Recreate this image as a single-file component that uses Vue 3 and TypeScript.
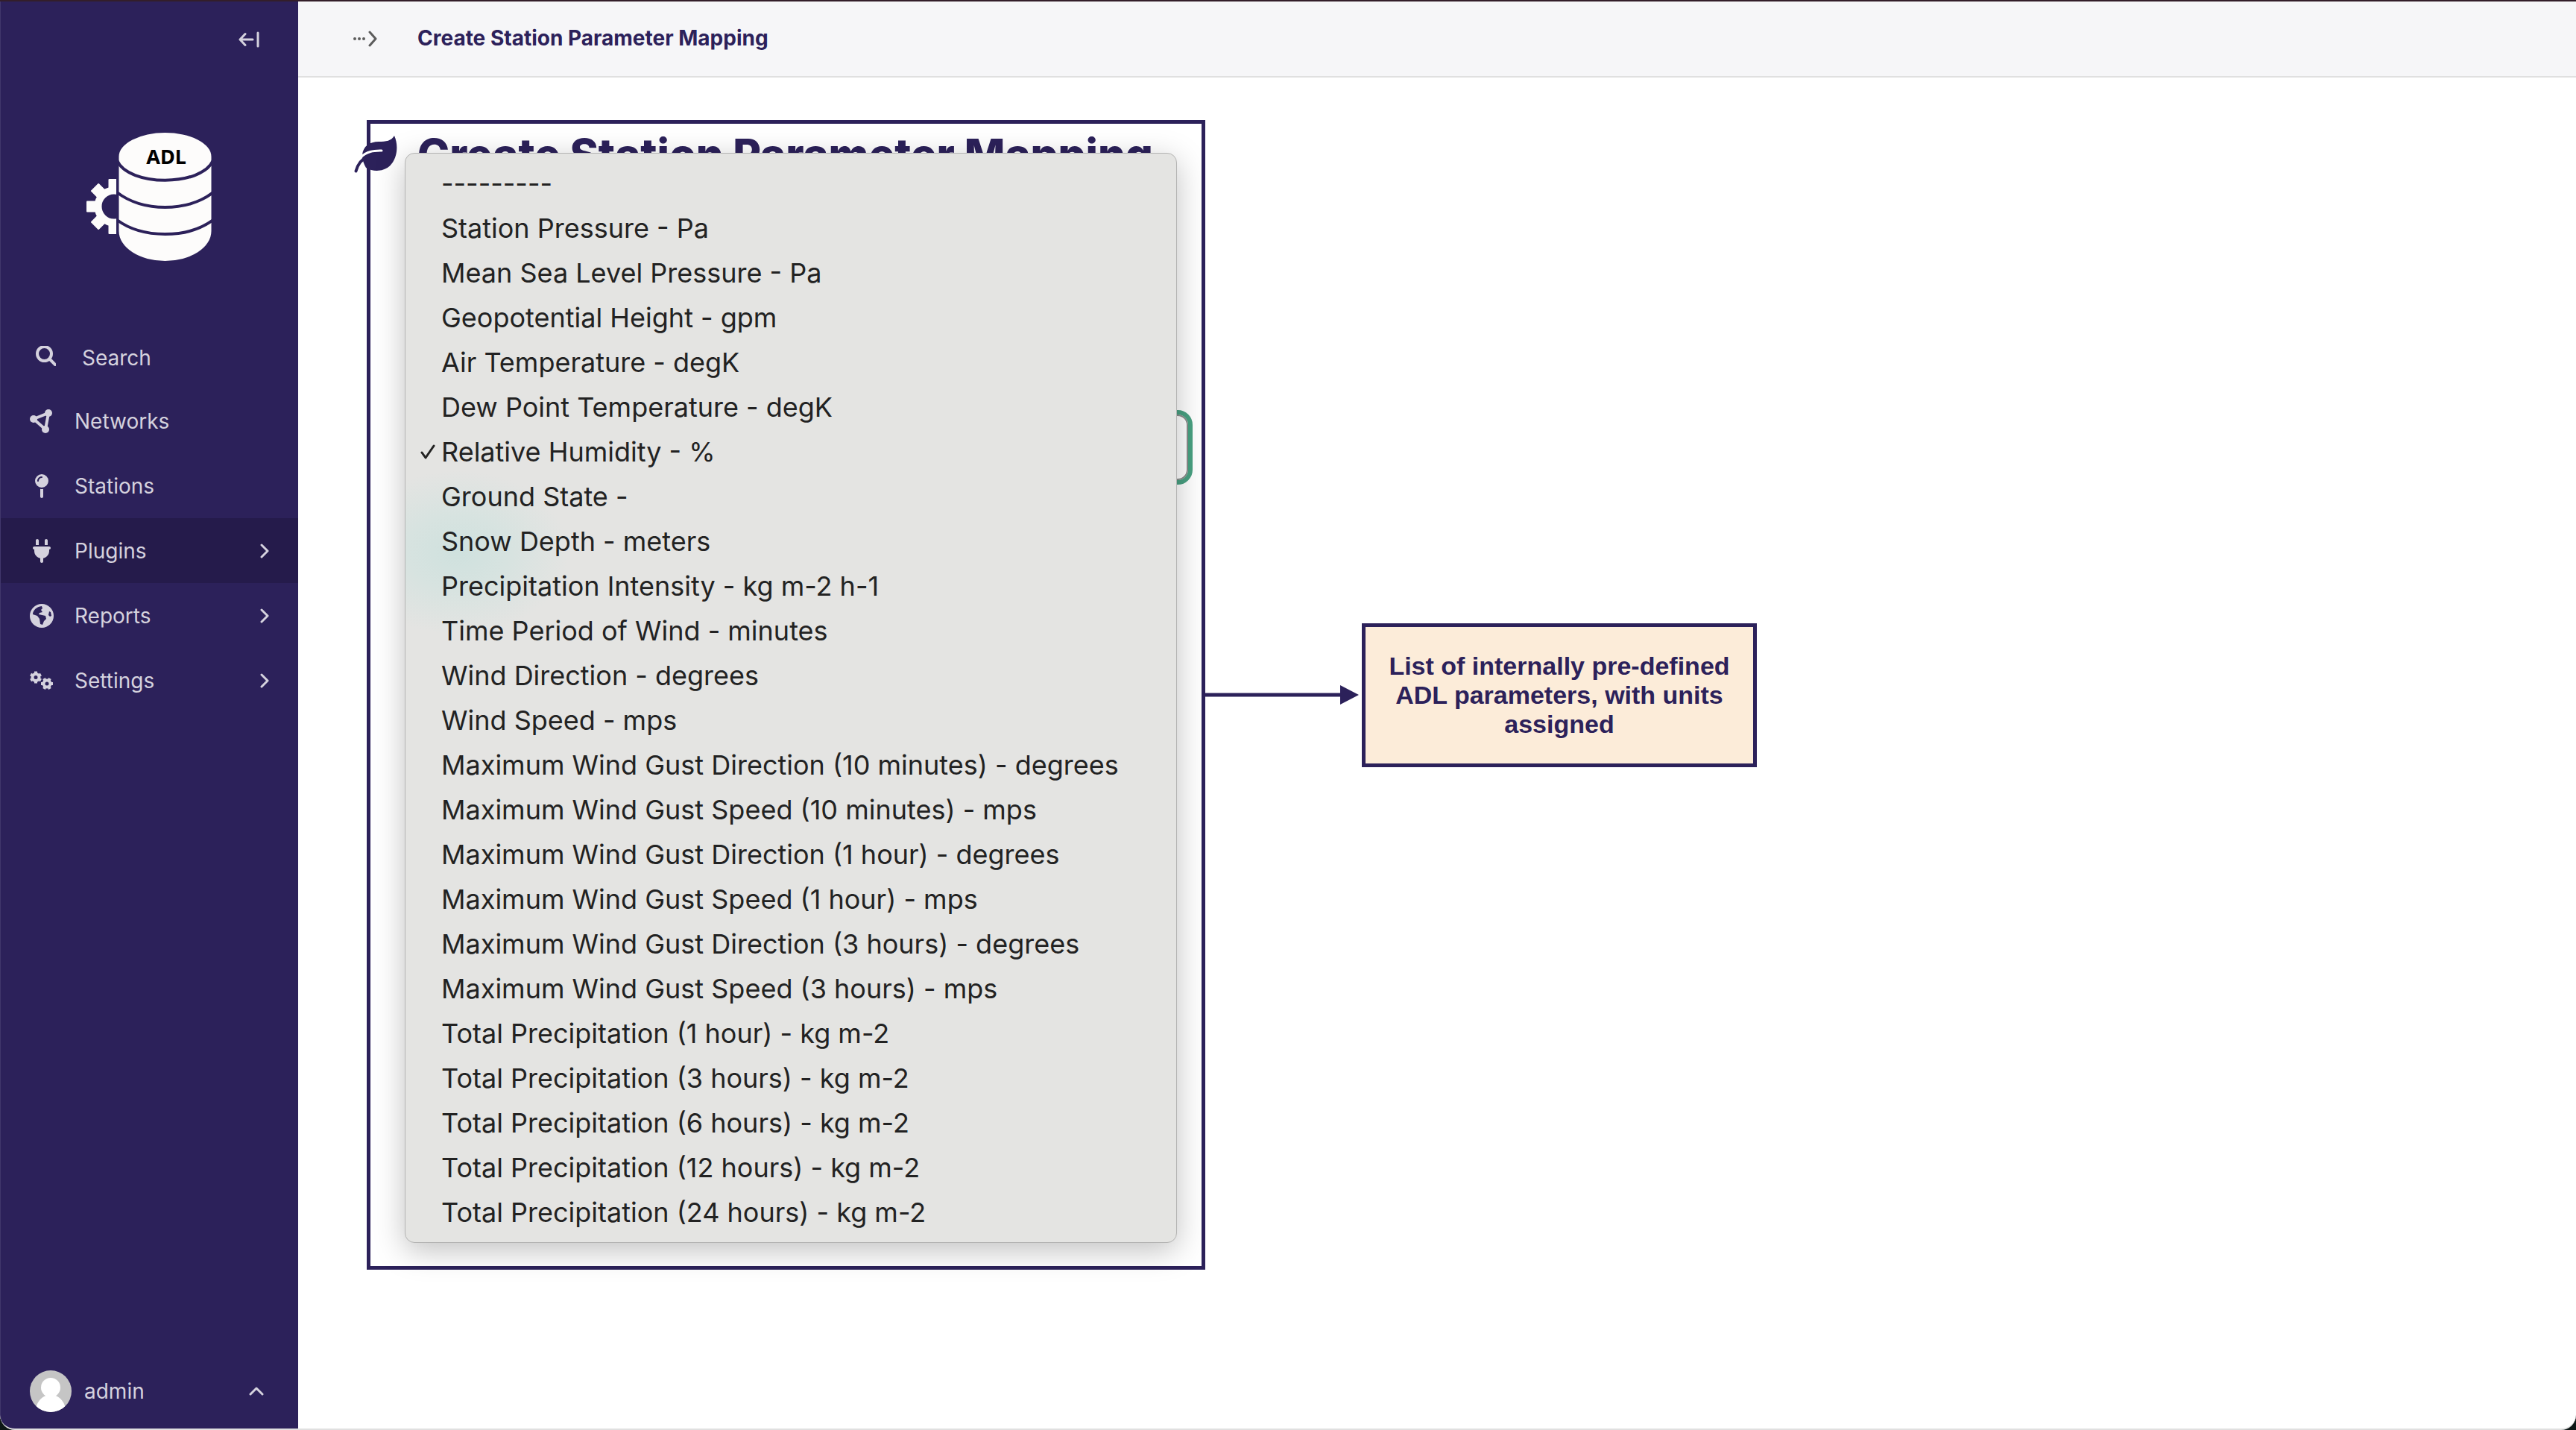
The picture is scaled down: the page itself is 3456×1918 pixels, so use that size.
<script setup lang="ts">
import { ref } from 'vue'

interface NavItem {
  label: string
  icon: 'networks' | 'stations' | 'plugins' | 'reports' | 'settings'
  expandable: boolean
}

const navItems: NavItem[] = [
  { label: 'Networks', icon: 'networks', expandable: false },
  { label: 'Stations', icon: 'stations', expandable: false },
  { label: 'Plugins', icon: 'plugins', expandable: true },
  { label: 'Reports', icon: 'reports', expandable: true },
  { label: 'Settings', icon: 'settings', expandable: true },
]
const activeItem = ref('Plugins')

const parameters: string[] = [
  '---------',
  'Station Pressure - Pa',
  'Mean Sea Level Pressure - Pa',
  'Geopotential Height - gpm',
  'Air Temperature - degK',
  'Dew Point Temperature - degK',
  'Relative Humidity - %',
  'Ground State -',
  'Snow Depth - meters',
  'Precipitation Intensity - kg m-2 h-1',
  'Time Period of Wind - minutes',
  'Wind Direction - degrees',
  'Wind Speed - mps',
  'Maximum Wind Gust Direction (10 minutes) - degrees',
  'Maximum Wind Gust Speed (10 minutes) - mps',
  'Maximum Wind Gust Direction (1 hour) - degrees',
  'Maximum Wind Gust Speed (1 hour) - mps',
  'Maximum Wind Gust Direction (3 hours) - degrees',
  'Maximum Wind Gust Speed (3 hours) - mps',
  'Total Precipitation (1 hour) - kg m-2',
  'Total Precipitation (3 hours) - kg m-2',
  'Total Precipitation (6 hours) - kg m-2',
  'Total Precipitation (12 hours) - kg m-2',
  'Total Precipitation (24 hours) - kg m-2',
]
const selected = ref('Relative Humidity - %')

const toothAngles = [0, 60, 120, 180, 240, 300]
const logoTeeth = [0, 45, 90, 135, 180]
</script>

<template>
  <div class="app">
    <aside class="sidebar">
      <button class="collapse" type="button" aria-label="Toggle sidebar">
        <svg width="28" height="22" viewBox="0 0 28 22" fill="none" stroke="currentColor" stroke-width="3" stroke-linecap="round" stroke-linejoin="round">
          <path d="M9 3.500L2 11l7 7.500M2.500 11H19M26 2v18" />
        </svg>
      </button>

      <a class="logo" href="#" aria-label="Home">
        <svg width="168" height="172" viewBox="0 0 168 172">
          <defs>
            <clipPath id="gear-half"><rect x="0" y="50" width="40" height="110" /></clipPath>
          </defs>
          <g clip-path="url(#gear-half)">
            <g transform="translate(37 99)">
              <circle r="21.500" fill="none" stroke="#fdfcfb" stroke-width="10" />
              <rect v-for="a in logoTeeth" :key="a" x="-7.500" y="-37" width="15" height="18" rx="1" fill="#fdfcfb" :transform="`rotate(${-a})`" />
            </g>
          </g>
          <path d="M43.500 32a62 32 0 0 1 124 0V132a62 40 0 0 1-124 0z" fill="#fdfcfb" />
          <g fill="none" class="logo-gap" stroke-width="4">
            <path d="M41 37C56 72.600 155 72.600 170 37" />
            <path d="M41 80C75 106.600 136 106.600 170 80" />
            <path d="M41 117C75 142.300 136 142.300 170 117" />
          </g>
          <text x="107" y="42" text-anchor="middle" class="logo-text">ADL</text>
        </svg>
      </a>

      <nav class="nav" aria-label="Main">
        <a class="nav-item search" href="#">
          <svg class="nav-icon" width="28" height="28" viewBox="0 0 28 28" fill="none" stroke="currentColor" stroke-width="4" stroke-linecap="round">
            <circle cx="12.500" cy="10.500" r="9.500" />
            <path d="M20 18l7 7" />
          </svg>
          <span class="nav-label">Search</span>
        </a>
        <a
          v-for="item in navItems"
          :key="item.label"
          class="nav-item"
          :class="{ active: item.label === activeItem }"
          href="#"
          @click.prevent="activeItem = item.label"
        >
          <svg v-if="item.icon === 'networks'" class="nav-icon" width="32" height="32" viewBox="0 0 32 32">
            <path d="M5 13L25 5L21 27Z" fill="none" stroke="currentColor" stroke-width="4" />
            <g fill="currentColor"><circle cx="5" cy="13" r="5" /><circle cx="25" cy="5" r="5" /><circle cx="21" cy="27" r="5" /></g>
          </svg>
          <svg v-else-if="item.icon === 'stations'" class="nav-icon" width="32" height="32" viewBox="0 0 320 512" fill="currentColor">
            <path d="M16 144a144 144 0 1 1 288 0A144 144 0 1 1 16 144zM160 80c8.800 0 16-7.200 16-16s-7.200-16-16-16c-53 0-96 43-96 96c0 8.800 7.200 16 16 16s16-7.200 16-16c0-35.300 28.700-64 64-64zM128 480V317.100c10.400 1.900 21.100 2.900 32 2.900s21.600-1 32-2.900V480c0 17.700-14.300 32-32 32s-32-14.300-32-32z" />
          </svg>
          <svg v-else-if="item.icon === 'plugins'" class="nav-icon" width="32" height="32" viewBox="0 0 384 512" fill="currentColor">
            <path d="M96 0C78.300 0 64 14.300 64 32v96h64V32c0-17.700-14.300-32-32-32zM288 0c-17.700 0-32 14.300-32 32v96h64V32c0-17.700-14.300-32-32-32zM32 160c-17.700 0-32 14.300-32 32s14.300 32 32 32v32c0 77.400 55 142 128 156.800V480c0 17.700 14.300 32 32 32s32-14.300 32-32V412.800C297 398 352 333.400 352 256V224c17.700 0 32-14.300 32-32s-14.300-32-32-32H32z" />
          </svg>
          <svg v-else-if="item.icon === 'reports'" class="nav-icon" width="32" height="32" viewBox="0 0 32 32">
            <circle cx="16" cy="16" r="16" fill="currentColor" />
            <g class="globe-sea">
              <path d="M4 14C4 9 9 3.500 16 3L17 6L15 8L17 11L13 12L12 14L21 16L22 20L19 23L17 28L14 27L13 20L10 16Z" />
              <path d="M26 10L28 11L29 16L27 17L25 15Z" />
            </g>
          </svg>
          <svg v-else class="nav-icon" width="32" height="32" viewBox="0 0 32 32" fill="none" stroke="currentColor">
            <g transform="translate(8 11.500)">
              <circle r="4.500" stroke-width="4" />
              <path v-for="a in toothAngles" :key="a" d="M0-5.500V-8" stroke-width="4" :transform="`rotate(${a})`" />
            </g>
            <g transform="translate(23 20)">
              <circle r="4.500" stroke-width="4" />
              <path v-for="a in toothAngles" :key="a" d="M0-5.500V-8" stroke-width="4" :transform="`rotate(${a + 30})`" />
            </g>
          </svg>
          <span class="nav-label">{{ item.label }}</span>
          <svg v-if="item.expandable" class="chevron" width="12" height="20" viewBox="0 0 12 20" fill="none" stroke="currentColor" stroke-width="3" stroke-linecap="round" stroke-linejoin="round">
            <path d="M2 2l8 8-8 8" />
          </svg>
        </a>
      </nav>

      <button class="account" type="button">
        <svg width="56" height="56" viewBox="0 0 56 56">
          <defs><clipPath id="avatar-round"><circle cx="28" cy="28" r="28" /></clipPath></defs>
          <g clip-path="url(#avatar-round)">
            <rect width="56" height="56" fill="#c5c5c5" />
            <circle cx="28" cy="23" r="13" fill="#fff" />
            <path d="M7 56C9 40 18 33 28 33s19 7 21 23z" fill="#fff" />
          </g>
        </svg>
        <span class="account-name">admin</span>
        <svg class="account-caret" width="20" height="12" viewBox="0 0 20 12" fill="none" stroke="currentColor" stroke-width="3" stroke-linecap="round" stroke-linejoin="round">
          <path d="M2 10l8-8 8 8" />
        </svg>
      </button>
    </aside>

    <div class="page">
      <header class="topbar">
        <button class="crumbs" type="button" aria-label="Toggle breadcrumbs">
          <svg width="32" height="22" viewBox="0 0 32 22" fill="none" stroke="currentColor" stroke-linecap="round" stroke-linejoin="round">
            <path d="M2 11h.01M8 11h.01M14 11h.01" stroke-width="4" />
            <path d="M22 2l8 9-8 9" stroke-width="3" />
          </svg>
        </button>
        <span class="crumb-title">Create Station Parameter Mapping</span>
      </header>

      <main class="content">
        <section class="panel">
          <form class="form">
            <h1 class="title">
              <svg width="58" height="50" viewBox="0 0 58 50">
                <path d="M54 0C60 13 58 31 48 40.500C40 48 26 49 16 43C13 38 11 32 11 26C12 14 21 8 33 8C43 8 50 7 54 0Z" fill="currentColor" />
                <path d="M9 29C17 21 26 20 37 20" fill="none" stroke="#fff" stroke-width="3" stroke-linecap="round" />
                <path d="M2.500 47.500C5 38 11 31 19 27" fill="none" stroke="currentColor" stroke-width="4" stroke-linecap="round" />
              </svg>
              <span>Create Station Parameter Mapping</span>
            </h1>
            <select v-model="selected" class="field" aria-label="ADL parameter">
              <option v-for="p in parameters" :key="p" :value="p">{{ p }}</option>
            </select>
          </form>

          <ul class="menu" role="listbox" aria-label="ADL parameter">
            <li
              v-for="p in parameters"
              :key="p"
              class="option"
              role="option"
              :aria-selected="p === selected"
              @click="selected = p"
            >
              <span class="tick">
                <svg v-if="p === selected" width="20" height="20" viewBox="0 0 20 20" fill="none" stroke="currentColor" stroke-width="3" stroke-linecap="round" stroke-linejoin="round">
                  <path d="M2 11l5 7L18 2" />
                </svg>
              </span>
              <span>{{ p }}</span>
            </li>
          </ul>
        </section>

        <svg class="arrow" width="206" height="26" viewBox="0 0 206 26" fill="currentColor" aria-hidden="true">
          <path d="M0 10.500H181V0L206 13L181 26V15.500H0Z" />
        </svg>

        <p class="note">List of internally pre-defined ADL parameters, with units assigned</p>
      </main>
    </div>
  </div>
</template>

<style>
html {
  background: #0d1716;
}
body {
  margin: 0;
}
</style>

<style scoped>
.app {
  --navy: #2c215a;
  box-sizing: border-box;
  display: flex;
  min-height: 100vh;
  overflow: hidden;
  border-top: 2px solid #331e2a;
  border-bottom: 2px solid #e0e0e0;
  border-radius: 0 0 20px 20px;
  background: #fff;
  font-family: Inter, "Liberation Sans", sans-serif;
}

button {
  padding: 0;
  border: 0;
  background: none;
  color: inherit;
  font: inherit;
  text-align: left;
}

svg {
  display: block;
  flex: none;
}

.sidebar {
  box-sizing: border-box;
  display: flex;
  flex: none;
  flex-direction: column;
  width: 400px;
  margin-bottom: -2px;
  border-left: 1px solid #41376b;
  border-bottom: 1px solid #41376b;
  border-bottom-left-radius: 20px;
  background: var(--navy);
  color: #d5d2de;
  font-size: 28px;
  line-height: 36px;
}

.collapse {
  align-self: flex-end;
  margin: 40px 52px 0 0;
}

.logo {
  margin: 114px 0 0 115px;
}

.logo-gap {
  stroke: var(--navy);
}

.logo-text {
  fill: #000;
  font: bold 27px "Noto Sans", sans-serif;
}

.nav {
  display: flex;
  flex-direction: column;
  margin-top: 84px;
}

.nav-item {
  box-sizing: border-box;
  display: flex;
  align-items: center;
  gap: 28px;
  height: 87px;
  padding: 0 39px;
  color: inherit;
  text-decoration: none;
}

.nav-item.search {
  gap: 35px;
  padding-left: 46px;
}

.search .nav-label {
  padding-top: 4px;
}

.nav-item.active {
  background: #251b4b;
}

.nav-label {
  flex: 1;
}

.globe-sea {
  fill: var(--navy);
}

.account {
  display: flex;
  align-items: center;
  gap: 17px;
  margin-top: auto;
  padding: 0 46px 23px 39px;
}

.account-name {
  flex: 1;
}

.page {
  flex: 1;
  min-width: 0;
}

.topbar {
  display: flex;
  align-items: center;
  gap: 54px;
  height: 100px;
  padding: 0 74px;
  border-bottom: 2px solid #e0e0e0;
  background: #f6f6f8;
}

.crumbs {
  color: #5c5c5c;
}

.crumb-title {
  padding-bottom: 2px;
  color: var(--navy);
  font-size: 28px;
  font-weight: 700;
  line-height: 36px;
}

.content {
  display: flex;
  align-items: center;
  padding: 57px 92px;
  color: var(--navy);
}

.panel {
  box-sizing: border-box;
  display: grid;
  flex: none;
  width: 1125px;
  border: 5px solid var(--navy);
}

.form,
.menu {
  grid-area: 1 / 1;
}

.title {
  display: flex;
  align-items: center;
  gap: 27px;
  margin: 9px 0 0 -22px;
  font-size: 58px;
  font-weight: 800;
  line-height: 64px;
  white-space: nowrap;
}

.field {
  display: block;
  box-sizing: border-box;
  width: 1028px;
  height: 88px;
  margin: 317px 0 0 69px;
  padding: 0 30px;
  border: 2px solid #8c8c8c;
  border-radius: 14px;
  outline: 6px solid #49a182;
  background: #fff;
  color: #222;
  font: 36px Inter, sans-serif;
  appearance: none;
}

.menu {
  z-index: 1;
  margin: 39px 33px 31px 46px;
  padding: 10px 0;
  border: 1px solid #b4b4b3;
  border-radius: 13px;
  background: radial-gradient(ellipse 150px 110px at 70px 535px, #cfe1de, #d7e3e0 45%, #e4e4e2) #e4e4e2;
  box-shadow: 0 10px 40px rgba(0, 0, 0, 0.25);
  color: #222;
  font-size: 36px;
  line-height: 60px;
  list-style: none;
}

.option {
  display: flex;
  align-items: center;
  padding-left: 20px;
  white-space: nowrap;
}

.tick {
  width: 28px;
}

.note {
  box-sizing: border-box;
  width: 530px;
  margin: 0 0 0 4px;
  padding: 33px 20px;
  border: 5px solid var(--navy);
  background: #fcecd9;
  font: bold 34px/39px "Liberation Sans", Arial, sans-serif;
  text-align: center;
}
</style>
